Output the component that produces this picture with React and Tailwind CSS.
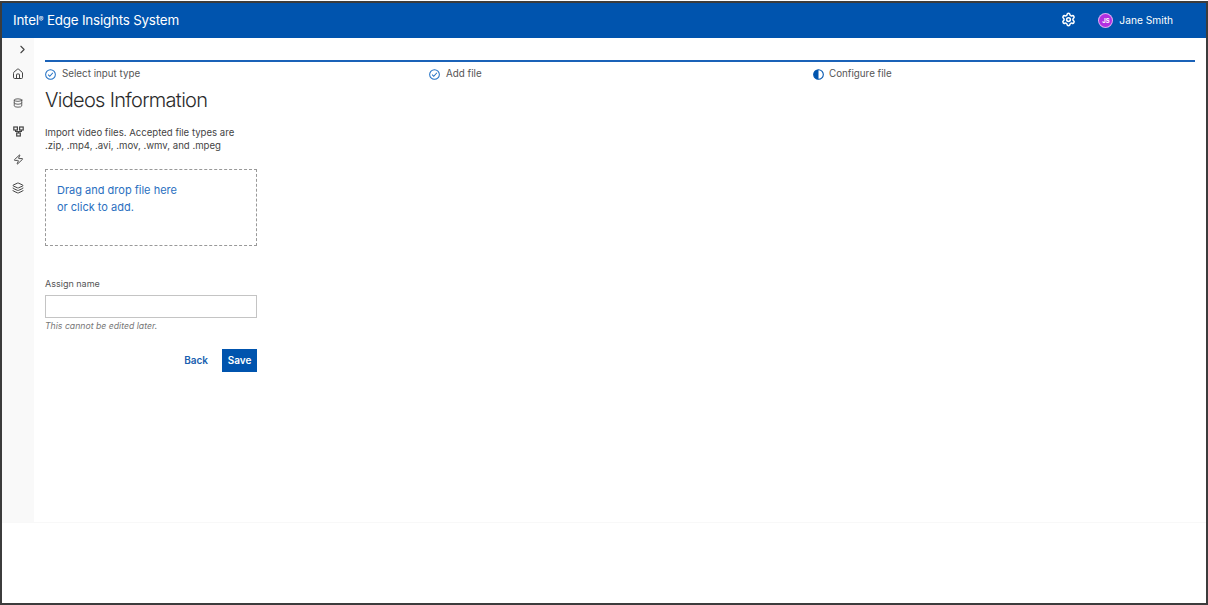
import React from 'react';
import { ChevronRight, Home, Database, Zap, Layers, Settings } from 'lucide-react';

const steps = [
  { label: 'Select input type', state: 'done' },
  { label: 'Add file', state: 'done' },
  { label: 'Configure file', state: 'active' },
];

const CheckCircle = () => (
  <svg width="11" height="11" viewBox="0 0 12 12" fill="none" stroke="#1f6fc4" strokeWidth="1.1" className="shrink-0">
    <circle cx="6" cy="6" r="5.3" />
    <path d="M3.4 6.2 5.2 8l3.4-3.9" />
  </svg>
);

const HalfCircle = () => (
  <svg width="11" height="11" viewBox="0 0 12 12" className="shrink-0">
    <circle cx="6" cy="6" r="5.25" fill="none" stroke="#0054ae" strokeWidth="1.2" />
    <path d="M6 .75a5.25 5.25 0 0 0 0 10.5z" fill="#0054ae" />
  </svg>
);

// two boxes on top, one below, joined by short lines
const TopologyIcon = () => (
  <svg width="11" height="11" viewBox="0 0 11 11" fill="none" stroke="currentColor" strokeWidth="1.2" className="mt-[18px]">
    <rect x="0.8" y="1" width="3.6" height="3" />
    <rect x="6.6" y="1" width="3.6" height="3" />
    <rect x="3.7" y="7" width="3.6" height="3" />
    <path d="M2.6 4v1.5h5.8V4M5.5 5.5V7" />
  </svg>
);

const App = () => {
  return (
    <div className="w-[1208px] h-[605px] bg-white pt-px overflow-hidden" style={{ fontFamily: 'Inter, "Noto Sans", sans-serif' }}>
      <div className="h-[604px] border-2 border-[#3c3c3c] flex flex-col">

        {/* Top bar */}
        <header className="h-[35px] shrink-0 bg-[#0054ae] flex items-center pl-[11px] pr-[33px] text-white">
          <span className="text-[13.4px] tracking-[-0.2px]">Intel<sup className="text-[7px]">®</sup> Edge Insights System</span>
          <Settings size={15} strokeWidth={2.4} className="ml-auto -mt-[2px]" />
          <div className="ml-[22px] w-[15px] h-[15px] rounded-full bg-[#b12fe0] border border-white/60 flex items-center justify-center text-[6px] font-bold">JS</div>
          <span className="ml-[6px] text-[10.2px]">Jane Smith</span>
        </header>

        <div className="flex border-b border-[#f8f8f8]">
          {/* Sidebar */}
          <nav className="w-[32px] h-[484px] shrink-0 bg-[#f9f9f9] flex flex-col items-center text-[#444]">
            <ChevronRight size={13} className="mt-[5px] ml-[8px]" />
            <Home size={12} className="mt-[12px]" />
            <Database size={10} className="mt-[18px]" />
            <TopologyIcon />
            <Zap size={11} className="mt-[17px] -skew-x-6" />
            <Layers size={12} className="mt-[17px]" />
          </nav>

          {/* Main content */}
          <main className="flex-1 min-w-0 pl-[11px] pr-[11px] pt-[22px]">
            <div className="h-[2px] bg-[#1a62b8]" />
            <div className="grid grid-cols-3 w-[1152px] mt-[6px]">
              {steps.map((s) => (
                <div key={s.label} className="flex items-center gap-[6px] h-[12px] text-[9.8px] text-[#555]">
                  {s.state === 'done' ? <CheckCircle /> : <HalfCircle />}
                  <span className={s.state === 'active' ? '-ml-[1px]' : ''}>{s.label}</span>
                </div>
              ))}
            </div>

            <h1 className="text-[20px] leading-[24px] font-light tracking-[-0.7px] text-[#2b2b2b] mt-[8px]">Videos Information</h1>

            <div className="w-[212px]">
              <p className="text-[9.6px] leading-[13px] text-[#444] mt-[14px]">
                Import video files. Accepted file types are<br />.zip, .mp4, .avi, .mov, .wmv, and .mpeg
              </p>

              <div className="h-[77px] mt-[17px] border border-dashed border-[#999] pl-[11px] pt-[12px] text-[11px] leading-[17px] text-[#2a6fc0]">
                Drag and drop file here<br />or click to add.
              </div>

              <label className="block text-[9px] leading-[12px] text-[#555] mt-[32px]">Assign name</label>
              <input className="block w-full h-[23px] mt-[5px] border border-[#c4c4c4] bg-white outline-none" />
              <p className="text-[8.7px] leading-[10px] italic text-[#777] mt-[3px]">This cannot be edited later.</p>

              <div className="flex items-center justify-end mt-[18px]">
                <button className="text-[10px] font-semibold text-[#1a5fb0] mr-[14px]">Back</button>
                <button className="w-[35px] h-[23px] bg-[#0054ae] text-white text-[10px] font-semibold">Save</button>
              </div>
            </div>
          </main>
        </div>
      </div>
    </div>
  );
};

export default App;
